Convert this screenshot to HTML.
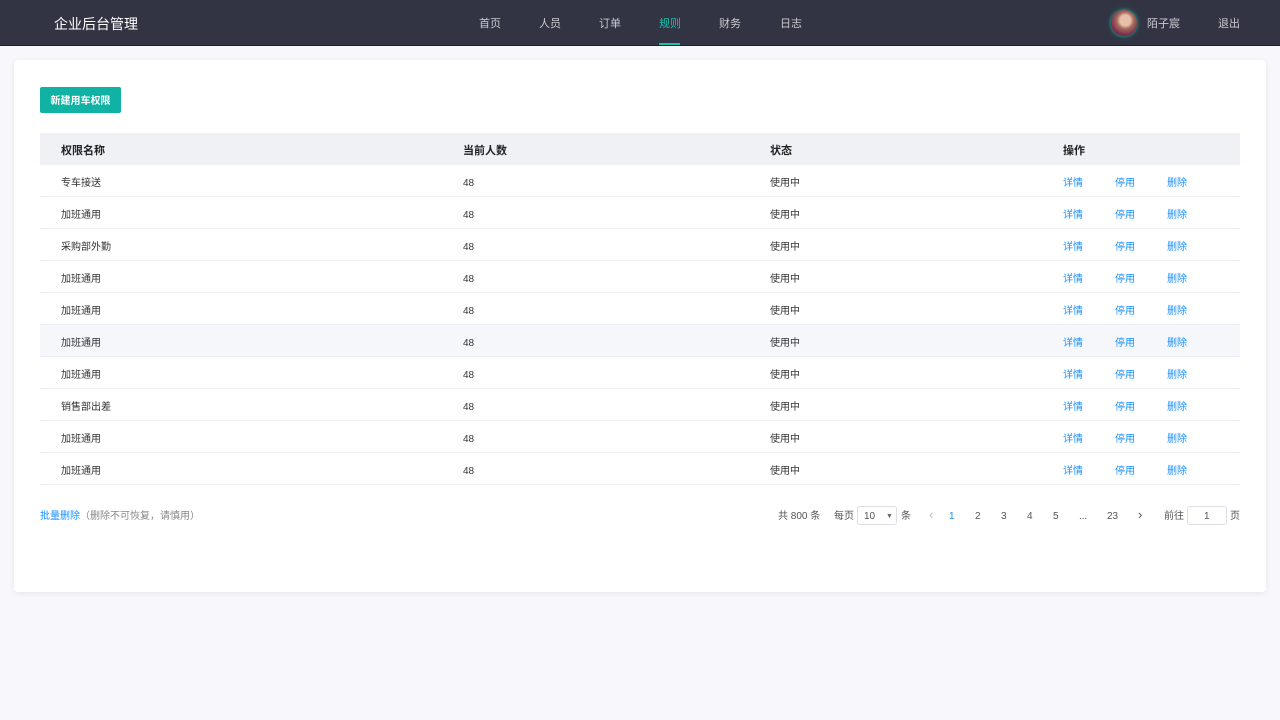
<!DOCTYPE html>
<html><head><meta charset="utf-8"><style>
*{margin:0;padding:0;box-sizing:border-box}
body{width:1280px;height:720px;background:#f8f8fc;font-family:"Liberation Sans","Noto Sans CJK SC",sans-serif;position:relative;overflow:hidden;color:#333}
.hd{position:absolute;left:0;top:0;width:1280px;height:46px;background:#323443;border-bottom:1px solid #1d1e28}
.logo{position:absolute;left:54px;top:1px;line-height:46px;color:#fff;font-size:14px}
.nav a{position:absolute;top:1px;line-height:46px;font-size:11px;color:#c9cad1;text-decoration:none}
.nav a.on{color:#16c1b0}
.bar{position:absolute;left:659px;top:43px;width:21px;height:2px;background:#16c1b0}
.av{position:absolute;left:1111px;top:10px;width:26px;height:26px;border-radius:50%;background:radial-gradient(circle at 55% 40%,#e8c0a8 0 25%,#a46a5c 40%,#7a2a4a 70%,#5a6a9a);box-shadow:0 0 4px #16c1b0}
.card{position:absolute;left:14px;top:60px;width:1252px;height:532px;background:#fff;border-radius:4px;box-shadow:0 1px 6px rgba(0,0,0,.08)}
.btn{position:absolute;left:40px;top:87px;width:81px;height:26px;background:#10b3a3;border-radius:2px;color:#fff;font-size:10px;font-weight:bold;text-align:center;line-height:26px;padding-top:2px}
.tbl{position:absolute;left:40px;top:133px;width:1200px}
.r{position:relative;height:32px;border-bottom:1px solid #ebeef5;font-size:10px;color:#333}
.r.h{background:#f0f1f5;font-weight:bold;font-size:11px;color:#222;border:none}
.r.hv{background:#f5f7fa}
.r span{position:absolute;top:3px;line-height:32px}
.r.h span{top:2px}
.c1{left:21px}.c2{left:423px}.c3{left:730px}.c4{left:1023px}
.l1,.l2,.l3{color:#1890ff}
.l1{left:1023px}.l2{left:1075px}.l3{left:1127px}
.ft{position:absolute;top:507px;line-height:19px;font-size:10px;color:#555}
.box{position:absolute;border:1px solid #dcdfe6;border-radius:3px;height:19px;top:506px;background:#fff}
</style></head><body>
<div class="hd"><div class="logo">企业后台管理</div>
<div class="nav"><a style="left:479px">首页</a><a style="left:539px">人员</a><a style="left:599px">订单</a><a class="on" style="left:659px">规则</a><a style="left:719px">财务</a><a style="left:780px">日志</a><a style="left:1147px">陌子宸</a><a style="left:1218px">退出</a></div>
<div class="bar"></div><div class="av"></div></div>
<div class="card"></div>
<div class="btn">新建用车权限</div>
<div class="tbl">
<div class="r h"><span class="c1">权限名称</span><span class="c2">当前人数</span><span class="c3">状态</span><span class="c4">操作</span></div>
<div class="r"><span class="c1">专车接送</span><span class="c2">48</span><span class="c3">使用中</span><span class="l1">详情</span><span class="l2">停用</span><span class="l3">删除</span></div>
<div class="r"><span class="c1">加班通用</span><span class="c2">48</span><span class="c3">使用中</span><span class="l1">详情</span><span class="l2">停用</span><span class="l3">删除</span></div>
<div class="r"><span class="c1">采购部外勤</span><span class="c2">48</span><span class="c3">使用中</span><span class="l1">详情</span><span class="l2">停用</span><span class="l3">删除</span></div>
<div class="r"><span class="c1">加班通用</span><span class="c2">48</span><span class="c3">使用中</span><span class="l1">详情</span><span class="l2">停用</span><span class="l3">删除</span></div>
<div class="r"><span class="c1">加班通用</span><span class="c2">48</span><span class="c3">使用中</span><span class="l1">详情</span><span class="l2">停用</span><span class="l3">删除</span></div>
<div class="r hv"><span class="c1">加班通用</span><span class="c2">48</span><span class="c3">使用中</span><span class="l1">详情</span><span class="l2">停用</span><span class="l3">删除</span></div>
<div class="r"><span class="c1">加班通用</span><span class="c2">48</span><span class="c3">使用中</span><span class="l1">详情</span><span class="l2">停用</span><span class="l3">删除</span></div>
<div class="r"><span class="c1">销售部出差</span><span class="c2">48</span><span class="c3">使用中</span><span class="l1">详情</span><span class="l2">停用</span><span class="l3">删除</span></div>
<div class="r"><span class="c1">加班通用</span><span class="c2">48</span><span class="c3">使用中</span><span class="l1">详情</span><span class="l2">停用</span><span class="l3">删除</span></div>
<div class="r"><span class="c1">加班通用</span><span class="c2">48</span><span class="c3">使用中</span><span class="l1">详情</span><span class="l2">停用</span><span class="l3">删除</span></div>
</div>
<div class="ft" style="left:40px;color:#1890ff">批量删除</div>
<div class="ft" style="left:80px;color:#888">（删除不可恢复，请慎用）</div>
<div class="ft" style="left:778px">共 800 条</div>
<div class="ft" style="left:834px">每页</div>
<div class="box" style="left:857px;width:40px"></div>
<div class="ft" style="left:864px">10</div>
<div class="ft" style="left:886px;font-size:7px;color:#666">▼</div>
<div class="ft" style="left:901px">条</div>
<div class="ft" style="left:929px;color:#bbb;font-size:13px;top:505px">‹</div>
<div class="ft" style="left:949px;color:#1890ff">1</div>
<div class="ft" style="left:975px">2</div>
<div class="ft" style="left:1001px">3</div>
<div class="ft" style="left:1027px">4</div>
<div class="ft" style="left:1053px">5</div>
<div class="ft" style="left:1079px">...</div>
<div class="ft" style="left:1107px">23</div>
<div class="ft" style="left:1138px;font-size:13px;top:505px">›</div>
<div class="ft" style="left:1164px">前往</div>
<div class="box" style="left:1187px;width:40px"></div>
<div class="ft" style="left:1204px">1</div>
<div class="ft" style="left:1230px">页</div>
</body></html>
